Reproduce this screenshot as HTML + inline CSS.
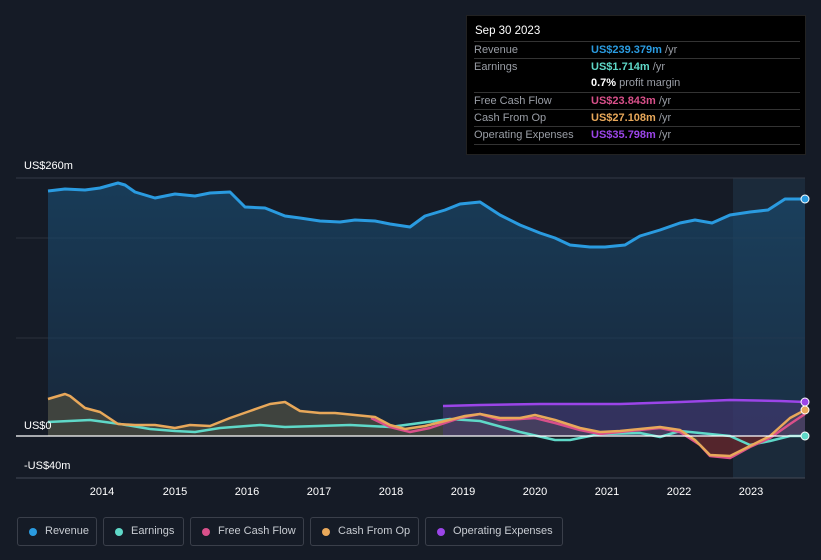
<!DOCTYPE html><html><head><meta charset="utf-8"><style>
body{margin:0;width:821px;height:560px;background:#151b26;font-family:"Liberation Sans",sans-serif;overflow:hidden;position:relative}
.tt{position:absolute;left:466px;top:15px;width:340px;height:140px;background:#000;border:1px solid #222;box-sizing:border-box;font-size:11px;color:#9a9ea6}
.tt .h{position:absolute;left:8px;top:9px;color:#fff;font-size:11.5px}
.r{position:absolute;left:7px;width:326px;height:17px;border-top:1px solid #333;line-height:17px}
.r span{position:absolute;left:117px;white-space:nowrap}
.lg{position:absolute;top:517px;height:29px;border:1px solid #3a3f4a;border-radius:3px;box-sizing:border-box;color:#c8ccd2;font-size:11px;line-height:27px;padding-left:27px;white-space:nowrap;overflow:hidden}
.lg i{position:absolute;left:11px;top:10px;width:8px;height:8px;border-radius:50%}
.ax{position:absolute;color:#fff;font-size:11px}
</style></head><body>
<svg width="821" height="560" style="position:absolute;left:0;top:0">
<defs><linearGradient id="g" x1="0" y1="0" x2="0" y2="1"><stop offset="0" stop-color="#1a4a6e" stop-opacity=".7"/><stop offset="1" stop-color="#1a3550" stop-opacity=".5"/></linearGradient></defs>
<rect x="733" y="178" width="72" height="300" fill="#1b2a3a"/>
<line x1="16" y1="178" x2="805" y2="178" stroke="#333a45"/>
<line x1="16" y1="238" x2="805" y2="238" stroke="#2a313c"/>
<line x1="16" y1="338" x2="805" y2="338" stroke="#2a313c"/>
<path d="M48 191L65 189L85 190L100 188L118 183L125 185L135 192L155 198L175 194L195 196L210 193L230 192L245 207L265 208L285 216L300 218L320 221L340 222L355 220L375 221L390 224L410 227L425 216L445 210L460 204L480 202L500 215L520 225L540 233L555 238L570 245L590 247L605 247L625 245L640 236L660 230L680 223L695 220L712 223L730 215L750 212L768 210L785 199L805 199L805 436L48 436Z" fill="url(#g)"/>
<path d="M48 399L65 394L70 396L85 408L100 412L118 424L135 425L155 425L175 428L190 425L210 426L230 418L250 411L270 404L285 402L300 411L320 413L335 413L355 415L375 417L390 425L405 429L425 426L445 421L465 416L480 414L500 418L520 418L535 415L555 420L580 428L600 432L620 431L640 429L660 427L680 430L695 440L710 455L730 456L750 446L770 436L790 418L805 410L805 436L48 436Z" fill="#5a5540" opacity=".6"/>
<path d="M443 406L480 405L540 404L620 404L680 402L730 400L780 401L805 402L805 436L443 436Z" fill="#4a3a7a" opacity=".55"/>
<path d="M695 436L710 455L730 456L750 446L770 436Z" fill="#5a1f2a" opacity=".8"/>
<path d="M48 422L90 420L120 424L150 429L175 431L195 432L220 428L260 425L285 427L350 425L390 427L420 423L450 419L480 421L520 432L555 440L570 440L600 434L640 433L660 437L680 431L700 433L730 436L750 445L770 441L790 436L805 436" fill="none" stroke="#5fd8c8" stroke-width="2.5" stroke-linejoin="round"/>
<path d="M443 406L480 405L540 404L620 404L680 402L730 400L780 401L805 402" fill="none" stroke="#9b45e8" stroke-width="2.5"/>
<path d="M371 418L390 427L410 432L430 428L460 418L480 414L500 420L520 419L535 418L555 423L580 430L600 434L640 430L660 428L680 432L700 445L710 456L730 458L750 447L770 438L790 424L805 414" fill="none" stroke="#d9508a" stroke-width="2.5" stroke-linejoin="round"/>
<path d="M48 399L65 394L70 396L85 408L100 412L118 424L135 425L155 425L175 428L190 425L210 426L230 418L250 411L270 404L285 402L300 411L320 413L335 413L355 415L375 417L390 425L405 429L425 426L445 421L465 416L480 414L500 418L520 418L535 415L555 420L580 428L600 432L620 431L640 429L660 427L680 430L695 440L710 455L730 456L750 446L770 436L790 418L805 410" fill="none" stroke="#e8a85a" stroke-width="2.5" stroke-linejoin="round"/>
<path d="M48 191L65 189L85 190L100 188L118 183L125 185L135 192L155 198L175 194L195 196L210 193L230 192L245 207L265 208L285 216L300 218L320 221L340 222L355 220L375 221L390 224L410 227L425 216L445 210L460 204L480 202L500 215L520 225L540 233L555 238L570 245L590 247L605 247L625 245L640 236L660 230L680 223L695 220L712 223L730 215L750 212L768 210L785 199L805 199" fill="none" stroke="#2a9be0" stroke-width="3" stroke-linejoin="round"/>
<line x1="16" y1="436" x2="805" y2="436" stroke="#fff" stroke-width="1.2"/>
<line x1="16" y1="478" x2="805" y2="478" stroke="#444a55"/>
<circle cx="805" cy="199" r="4" fill="#2a9be0" stroke="#fff"/><circle cx="805" cy="402" r="4" fill="#9b45e8" stroke="#fff"/><circle cx="805" cy="410" r="4" fill="#e8a85a" stroke="#fff"/><circle cx="805" cy="436" r="4" fill="#5fd8c8" stroke="#fff"/>
<g fill="#fff" font-size="11" text-anchor="middle" font-family="Liberation Sans"><text x="102" y="495">2014</text><text x="175" y="495">2015</text><text x="247" y="495">2016</text><text x="319" y="495">2017</text><text x="391" y="495">2018</text><text x="463" y="495">2019</text><text x="535" y="495">2020</text><text x="607" y="495">2021</text><text x="679" y="495">2022</text><text x="751" y="495">2023</text></g>
</svg>
<div class="ax" style="left:24px;top:160px">US$260m</div>
<div class="ax" style="left:24px;top:420px">US$0</div>
<div class="ax" style="left:24px;top:460px">-US$40m</div>
<div class="tt"><div class="h">Sep 30 2023</div>
<div class="r" style="top:25px">Revenue<span><b style="color:#2a9be0">US$239.379m</b> /yr</span></div>
<div class="r" style="top:42px">Earnings<span><b style="color:#5fd8c8">US$1.714m</b> /yr</span></div>
<div class="r" style="top:59px;border:0"><span><b style="color:#fff">0.7%</b> profit margin</span></div>
<div class="r" style="top:76px">Free Cash Flow<span><b style="color:#d9508a">US$23.843m</b> /yr</span></div>
<div class="r" style="top:93px">Cash From Op<span><b style="color:#e8a85a">US$27.108m</b> /yr</span></div>
<div class="r" style="top:110px;border-bottom:1px solid #333">Operating Expenses<span><b style="color:#9b45e8">US$35.798m</b> /yr</span></div>
</div>
<div class="lg" style="left:17px;width:80px"><i style="background:#2a9be0"></i>Revenue</div>
<div class="lg" style="left:103px;width:81px"><i style="background:#5fd8c8"></i>Earnings</div>
<div class="lg" style="left:190px;width:114px"><i style="background:#d9508a"></i>Free Cash Flow</div>
<div class="lg" style="left:310px;width:109px"><i style="background:#e8a85a"></i>Cash From Op</div>
<div class="lg" style="left:425px;width:138px"><i style="background:#9b45e8"></i>Operating Expenses</div>
</body></html>
